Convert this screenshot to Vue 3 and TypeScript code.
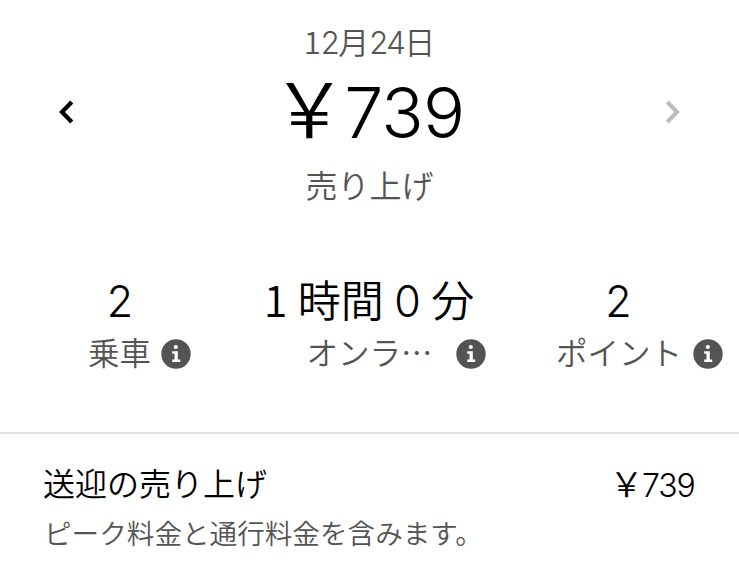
<script setup lang="ts">
interface Run { text: string; kind: 'num' | 'one' | 'kanji' }
interface Stat { value: Run[]; label: string; kind: string }

// Splits a value into digit and kanji runs so that each gets its own face.
function runs(text: string): Run[] {
  return (text.match(/1|[02-9]+|[^0-9]+/g) ?? []).map((part) => ({
    text: part.trim(),
    kind: part === '1' ? 'one' : /^\d/.test(part) ? 'num' : 'kanji',
  }))
}

const date = runs('12月24日')
const stats: Stat[] = [
  { value: runs('2'), label: '乗車', kind: 'rides' },
  { value: runs('1 時間 0 分'), label: 'オンラ…', kind: 'online' },
  { value: runs('2'), label: 'ポイント', kind: 'points' },
]
</script>

<template>
  <main class="screen">
    <section class="summary">
      <button class="nav" aria-label="前の日">
        <svg width="18" height="26" viewBox="0 0 18 26"><path d="M13.8 3 4 13l9.8 10" /></svg>
      </button>
      <div class="total">
        <div class="date"><span v-for="(r, i) in date" :key="i" :class="r.kind">{{ r.text }}</span></div>
        <div class="amount"><span class="yen">￥</span><span class="num">739</span></div>
        <div class="caption">売り上げ</div>
      </div>
      <button class="nav next" aria-label="次の日">
        <svg width="18" height="26" viewBox="0 0 18 26"><path d="M4.2 3 14 13 4.2 23" /></svg>
      </button>
    </section>
    <section class="stats">
      <div v-for="s in stats" :key="s.kind" class="stat" :class="s.kind">
        <div class="value"><span v-for="(r, i) in s.value" :key="i" :class="r.kind">{{ r.text }}</span></div>
        <div class="label">
          <span>{{ s.label }}</span>
          <svg class="info" width="30" height="30" viewBox="0 0 30 30">
            <circle cx="15" cy="15" r="14.7" fill="#545454" />
            <circle cx="14.8" cy="8" r="2.1" fill="#fff" />
            <path d="M11.2 12.2h5.6v8.3h2.4v2.4h-8v-2.4h2.3v-5.8h-2.3z" fill="#fff" />
          </svg>
        </div>
      </div>
    </section>
    <section class="detail">
      <div class="row"><span class="title">送迎の売り上げ</span><span class="price"><span class="yen">￥</span><span class="num">739</span></span></div>
      <div class="note">ピーク料金と通行料金を含みます。</div>
    </section>
  </main>
</template>

<style>
body { margin: 0; background: #fff; }
</style>
<style scoped>
.screen { width: 739px; height: 571px; overflow: hidden; box-sizing: border-box; font-family: "Noto Sans CJK JP", sans-serif; color: #000; font-weight: 350; }
.summary { display: grid; grid-template-columns: 134px 1fr 134px; height: 266px; }
.nav { border: 0; padding: 0; background: none; height: 224px; display: flex; align-items: center; justify-content: center; }
.nav path { fill: none; stroke: #000; stroke-width: 4.2; }
.next path { stroke: #bdbdbd; }
.num { font-family: Inter, sans-serif; }
.total { text-align: center; padding-top: 20px; white-space: nowrap; }
.date, .amount, .value, .price { display: flex; align-items: baseline; justify-content: center; }
.date { font-size: 31px; height: 42px; line-height: 42px; color: #545454; }
.date .num { letter-spacing: -1.5px; }
.amount { font-size: 70px; height: 92px; line-height: 86px; padding-left: 12px; }
.amount .num { letter-spacing: -0.8px; }
.yen { font-size: 1.08em; margin: 0 -0.04em 0 -0.2em; }
.caption { font-size: 32px; line-height: 56px; margin-top: 2px; color: #545454; }
.stats { display: grid; grid-template-columns: 240px 258px 241px; height: 166px; }
.stat { padding-top: 8px; text-align: center; white-space: nowrap; }
.value { font-size: 43px; height: 52px; line-height: 55px; gap: 10.5px; }
.online .value { line-height: 48px; }
.label { display: flex; align-items: center; justify-content: center; gap: 10px; padding-left: 39px; font-size: 31.5px; line-height: 50px; color: #545454; }
.info { margin-top: 6px; }
.online .label { padding-left: 54px; gap: 23px; }
.points .label { padding-left: 42px; gap: 11px; }
.detail { border-top: 2px solid #e2e2e2; padding: 27px 44px 0 43px; }
.row { display: flex; justify-content: space-between; font-size: 32px; height: 42px; line-height: 42px; }
.price { line-height: 44px; }
.price .num { letter-spacing: -1.2px; margin-right: 0.5px; }
.price .yen { font-size: 34px; }
.note { font-size: 27.6px; line-height: 58px; padding-left: 1px; color: #545454; }
</style>
